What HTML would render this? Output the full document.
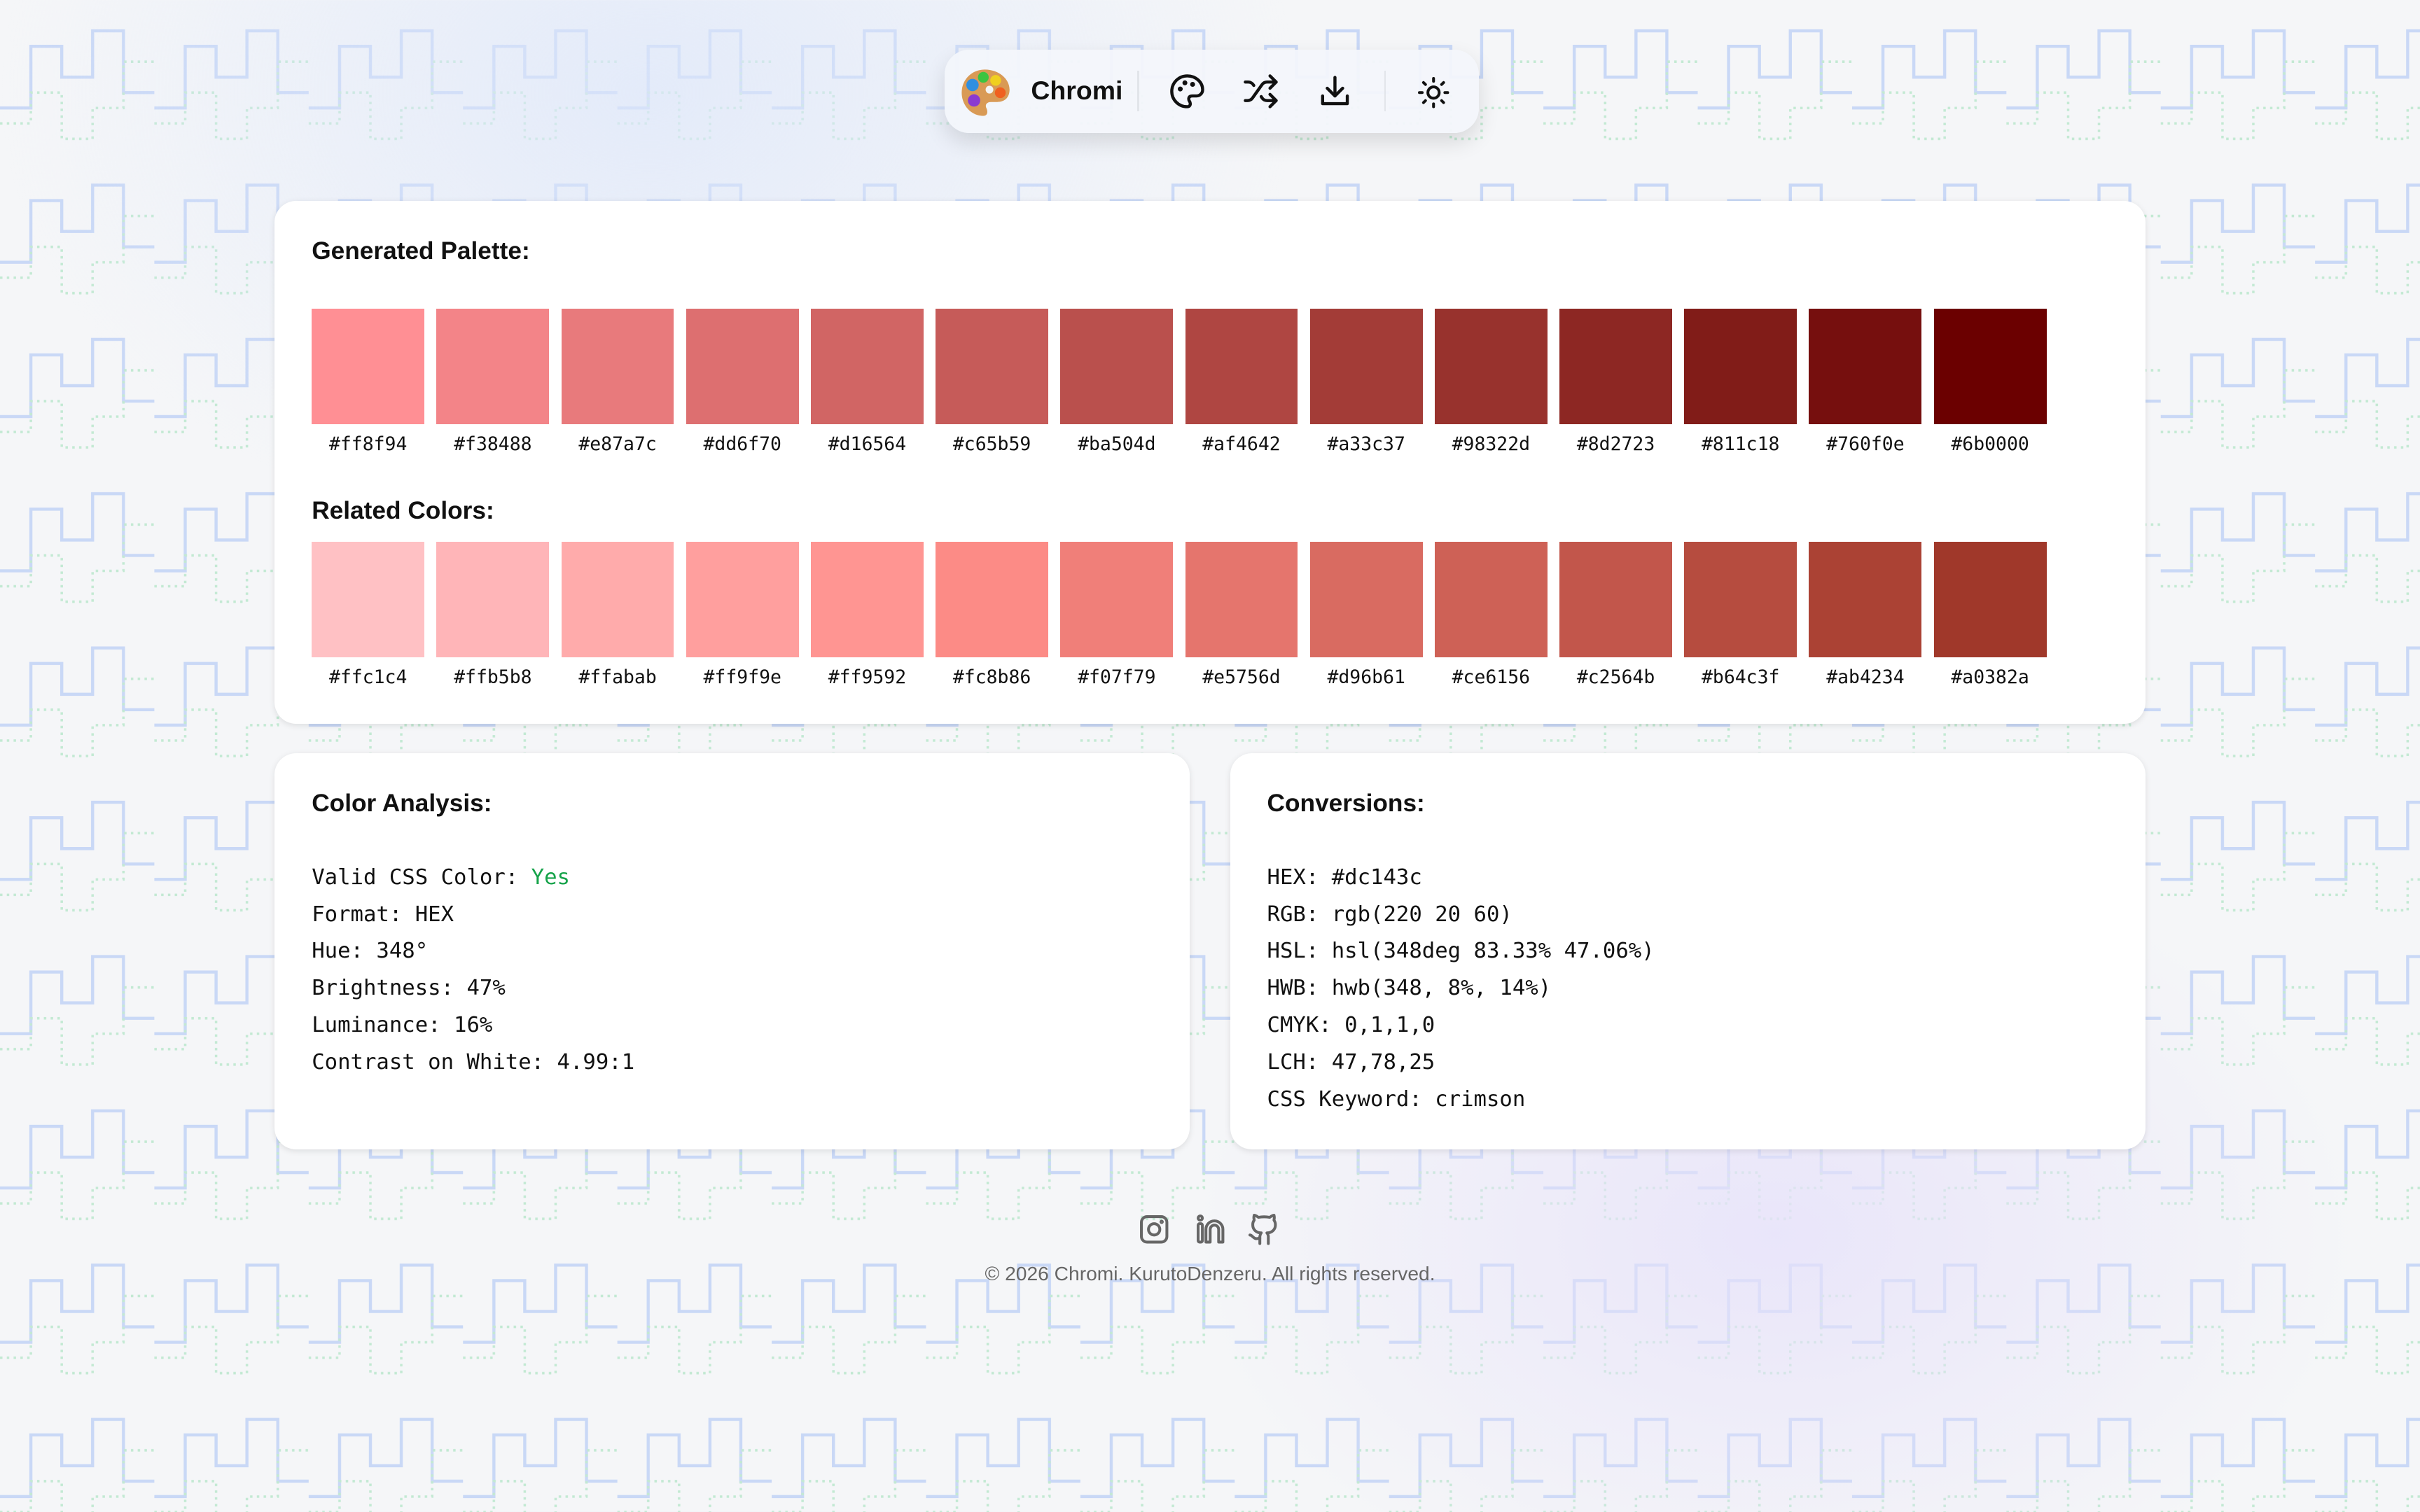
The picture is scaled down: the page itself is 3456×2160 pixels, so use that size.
<!DOCTYPE html>
<html><head><meta charset="utf-8">
<style>
html{zoom:2.2041}
*{margin:0;padding:0;box-sizing:border-box}
body{width:1568px;height:980px;position:relative;overflow:hidden;font-family:"Liberation Sans",sans-serif;color:#111;
background:#f5f6f8;}
.bg{position:absolute;left:0;top:0;width:1568px;height:980px}
.glow{position:absolute;inset:0;background:radial-gradient(ellipse 420px 300px at 420px 60px,rgba(220,230,250,.7),transparent),radial-gradient(ellipse 380px 260px at 1150px 800px,rgba(230,225,250,.8),transparent)}
.nav{position:absolute;left:612px;top:32px;width:346px;height:54px;border-radius:16px;background:rgba(243,246,251,.95);box-shadow:0 6px 14px rgba(0,0,0,.12)}
.card{position:absolute;background:#fff;border-radius:14px;box-shadow:0 1px 4px rgba(0,0,0,.1)}
h2{position:absolute;font-size:16px;font-weight:700;left:24px}
.row{position:absolute;left:24px;display:flex;gap:7.85px}
.sw{width:73px}
.sw div{width:73px;height:75px}
.sw span{display:block;text-align:center;font-family:"DejaVu Sans Mono",monospace;font-size:12px;margin-top:6px;margin-left:-4px;margin-right:-4px}
.mono{position:absolute;left:24px;top:69px;font-family:"DejaVu Sans Mono",monospace;font-size:13.9px;line-height:24px}
.foot{position:absolute;top:818px;left:0;width:1568px;text-align:center;font-size:12.8px;color:#666}
</style></head><body>
<svg class="bg" width="1568" height="980"><defs><pattern id="p" width="100" height="100" patternUnits="userSpaceOnUse">
<polyline points="0,70 20,70 20,30 40,30 40,50 60,50 60,20 80,20 80,60 100,60" fill="none" stroke="#c9d8f6" stroke-width="2"/>
<polyline points="0,80 20,80 20,60 40,60 40,90 60,90 60,70 80,70 80,40 100,40" fill="none" stroke="#c3e9d3" stroke-width="1.6" stroke-dasharray="1.6 2.8"/>
</pattern></defs><rect width="1568" height="980" fill="url(#p)"/></svg>
<div class="glow"></div>

<div class="nav">
<svg style="position:absolute;left:9px;top:11px" width="34" height="34" viewBox="0 0 34 34"><path d="M17 2C8 2 2 9 2 17c0 8 6 15 14 15 3 0 3-3 2-5-1-2 0-4 3-4h4c5 0 8-3 8-8C33 8 26 2 17 2z" fill="#d99a55"/><circle cx="20" cy="15" r="2.5" fill="#f3f3f3"/><circle cx="9" cy="12" r="4" fill="#2f8fe0"/><circle cx="16" cy="7" r="3.5" fill="#3cc440"/><circle cx="24" cy="9" r="3.5" fill="#f0d020"/><circle cx="27" cy="17" r="3.5" fill="#f06020"/><circle cx="10" cy="22" r="4" fill="#8a3ad0"/></svg>
<div style="position:absolute;left:56px;top:17px;font-size:17px;font-weight:700">Chromi</div>
<div style="position:absolute;left:125px;top:14px;width:1px;height:26px;background:#e2e5ea"></div>
<div style="position:absolute;left:285px;top:14px;width:1px;height:26px;background:#e2e5ea"></div>
<svg style="position:absolute;left:145px;top:15px" width="24" height="24" viewBox="0 0 24 24" fill="none" stroke="#111" stroke-width="2" stroke-linecap="round" stroke-linejoin="round"><path d="M12 2a10 10 0 0 0 0 20c1.5 0 2-1 2-2 0-1.5-1-1.5-1-3s1-2 2.5-2H18a4 4 0 0 0 4-4c0-5-4.5-9-10-9z"/><circle cx="7.5" cy="10.5" r=".6" fill="#111"/><circle cx="10.5" cy="6.5" r=".6" fill="#111"/><circle cx="15.5" cy="7.5" r=".6" fill="#111"/></svg>
<svg style="position:absolute;left:193px;top:15px" width="24" height="24" viewBox="0 0 24 24" fill="none" stroke="#111" stroke-width="2" stroke-linecap="round" stroke-linejoin="round"><path d="M2 18h1.4c1.3 0 2.5-.6 3.3-1.7l6.1-8.6A4 4 0 0 1 16 6h6"/><path d="m18 2 4 4-4 4"/><path d="M2 6h1.9c1.5 0 2.9.9 3.6 2.2"/><path d="M22 18h-5.9c-1.3 0-2.6-.7-3.3-1.8l-.5-.8"/><path d="m18 14 4 4-4 4"/></svg>
<svg style="position:absolute;left:241px;top:15px" width="24" height="24" viewBox="0 0 24 24" fill="none" stroke="#111" stroke-width="2" stroke-linecap="round" stroke-linejoin="round"><path d="M4 15v5h16v-5"/><path d="M12 3v12"/><path d="m7 10 5 5 5-5"/></svg>
<svg style="position:absolute;left:306px;top:17px" width="22" height="22" viewBox="0 0 24 24" fill="none" stroke="#111" stroke-width="2" stroke-linecap="round"><circle cx="12" cy="12" r="4"/><path d="M12 2v2M12 20v2M4.9 4.9l1.4 1.4M17.7 17.7l1.4 1.4M2 12h2M20 12h2M6.3 17.7l-1.4 1.4M19.1 4.9l-1.4 1.4"/></svg>
</div>

<div class="card" style="left:178px;top:130px;width:1212px;height:339px">
<h2 style="top:24px">Generated Palette:</h2>
<div class="row" style="top:70px">
<div class="sw"><div style="background:#ff8f94"></div><span>#ff8f94</span></div>
<div class="sw"><div style="background:#f38488"></div><span>#f38488</span></div>
<div class="sw"><div style="background:#e87a7c"></div><span>#e87a7c</span></div>
<div class="sw"><div style="background:#dd6f70"></div><span>#dd6f70</span></div>
<div class="sw"><div style="background:#d16564"></div><span>#d16564</span></div>
<div class="sw"><div style="background:#c65b59"></div><span>#c65b59</span></div>
<div class="sw"><div style="background:#ba504d"></div><span>#ba504d</span></div>
<div class="sw"><div style="background:#af4642"></div><span>#af4642</span></div>
<div class="sw"><div style="background:#a33c37"></div><span>#a33c37</span></div>
<div class="sw"><div style="background:#98322d"></div><span>#98322d</span></div>
<div class="sw"><div style="background:#8d2723"></div><span>#8d2723</span></div>
<div class="sw"><div style="background:#811c18"></div><span>#811c18</span></div>
<div class="sw"><div style="background:#760f0e"></div><span>#760f0e</span></div>
<div class="sw"><div style="background:#6b0000"></div><span>#6b0000</span></div>
</div>
<h2 style="top:192px">Related Colors:</h2>
<div class="row" style="top:221px">
<div class="sw"><div style="background:#ffc1c4"></div><span>#ffc1c4</span></div>
<div class="sw"><div style="background:#ffb5b8"></div><span>#ffb5b8</span></div>
<div class="sw"><div style="background:#ffabab"></div><span>#ffabab</span></div>
<div class="sw"><div style="background:#ff9f9e"></div><span>#ff9f9e</span></div>
<div class="sw"><div style="background:#ff9592"></div><span>#ff9592</span></div>
<div class="sw"><div style="background:#fc8b86"></div><span>#fc8b86</span></div>
<div class="sw"><div style="background:#f07f79"></div><span>#f07f79</span></div>
<div class="sw"><div style="background:#e5756d"></div><span>#e5756d</span></div>
<div class="sw"><div style="background:#d96b61"></div><span>#d96b61</span></div>
<div class="sw"><div style="background:#ce6156"></div><span>#ce6156</span></div>
<div class="sw"><div style="background:#c2564b"></div><span>#c2564b</span></div>
<div class="sw"><div style="background:#b64c3f"></div><span>#b64c3f</span></div>
<div class="sw"><div style="background:#ab4234"></div><span>#ab4234</span></div>
<div class="sw"><div style="background:#a0382a"></div><span>#a0382a</span></div>
</div>
</div>

<div class="card" style="left:178px;top:488px;width:593px;height:257px">
<h2 style="top:24px">Color Analysis:</h2>
<div class="mono">Valid CSS Color: <span style="color:#16a34a">Yes</span><br>Format: HEX<br>Hue: 348°<br>Brightness: 47%<br>Luminance: 16%<br>Contrast on White: 4.99:1</div>
</div>
<div class="card" style="left:797px;top:488px;width:593px;height:257px">
<h2 style="top:24px">Conversions:</h2>
<div class="mono">HEX: #dc143c<br>RGB: rgb(220 20 60)<br>HSL: hsl(348deg 83.33% 47.06%)<br>HWB: hwb(348, 8%, 14%)<br>CMYK: 0,1,1,0<br>LCH: 47,78,25<br>CSS Keyword: crimson</div>
</div>

<svg style="position:absolute;left:737px;top:786px" width="22" height="22" viewBox="0 0 24 24" fill="none" stroke="#666" stroke-width="2"><rect x="3" y="3" width="18" height="18" rx="4"/><circle cx="12" cy="12" r="4"/><circle cx="17.3" cy="6.7" r=".5" fill="#666"/></svg>
<svg style="position:absolute;left:773px;top:786px" width="22" height="22" viewBox="0 0 24 24" fill="none" stroke="#666" stroke-width="2" stroke-linejoin="round"><circle cx="5" cy="4" r="1.5"/><rect x="3.5" y="8" width="3" height="13" rx="1"/><path d="M9 21V12a6 6 0 0 1 12 0v9h-3v-9a3 3 0 0 0-6 0v9z"/></svg>
<svg style="position:absolute;left:808px;top:786px" width="22" height="22" viewBox="0 0 24 24" fill="none" stroke="#666" stroke-width="2" stroke-linecap="round" stroke-linejoin="round"><path d="M15 22v-4a4.8 4.8 0 0 0-1-3.5c3 0 6-2 6-5.5.1-1.3-.3-2.5-1-3.5.3-1.2.3-2.4 0-3.5 0 0-1 0-3 1.5-2.6-.5-5.4-.5-8 0C6 2 5 2 5 2c-.3 1.1-.3 2.3 0 3.5A5.4 5.4 0 0 0 4 9c0 3.5 3 5.5 6 5.5-.4.5-.7 1-.8 1.7-.2.6-.3 1.2-.2 1.8v4"/><path d="M9 18c-4.5 2-5-2-7-2"/></svg>
<div class="foot">© 2026 Chromi. KurutoDenzeru. All rights reserved.</div>
</body></html>
